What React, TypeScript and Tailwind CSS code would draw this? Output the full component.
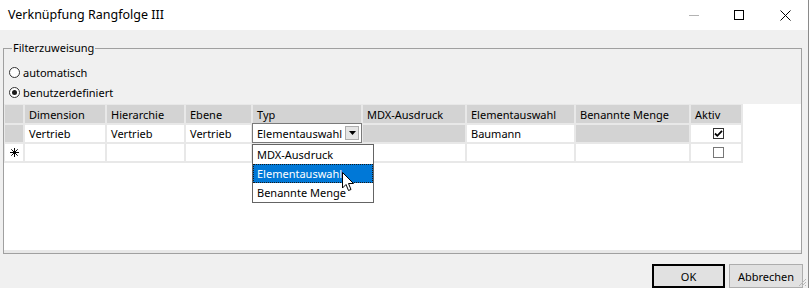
import React from "react";

const font = { fontFamily: '"Noto Sans", "Liberation Sans", sans-serif' };

const columns = ["Dimension", "Hierarchie", "Ebene", "Typ", "MDX-Ausdruck", "Elementauswahl", "Benannte Menge", "Aktiv"];

const Radio = ({ checked, label }: { checked?: boolean; label: string }) => (
    <div className="flex h-[20px] items-center">
        <span className="ml-[5px] flex h-[11px] w-[11px] items-center justify-center rounded-full border border-[#333] bg-white">
            {checked && <span className="h-[5px] w-[5px] rounded-full bg-[#1a1a1a]" />}
        </span>
        <span className="ml-[3px] text-[11px] leading-none text-black">{label}</span>
    </div>
);

const Checkbox = ({ checked }: { checked?: boolean }) => (
    <span className={`flex h-[11px] w-[11px] items-center justify-center border bg-white ${checked ? "border-[#333]" : "border-[#777]"}`}>
        {checked && (
            <svg width="9" height="9" viewBox="0 0 9 9">
                <path d="M1 4.5 L3.3 6.8 L8 1.8" stroke="#000" strokeWidth="1.8" fill="none" />
            </svg>
        )}
    </span>
);

const Cell = ({ children, gray, className = "" }: { children?: React.ReactNode; gray?: boolean; className?: string }) => (
    <div className={`flex items-center pl-[4px] text-[11px] leading-none text-black ${gray ? "bg-[#d3d3d3]" : "bg-white"} ${className}`}>
        {children}
    </div>
);

const TypCombo = () => (
    <div className="relative bg-white">
        <div className="absolute -top-[2px] -left-[1px] -right-[1px] -bottom-[1px] flex items-center border border-[#7a7a7a] bg-white">
            <span className="ml-[4px] text-[11px] leading-none text-black">Elementauswahl</span>
            <span className="ml-auto mr-[2px] flex h-[14px] w-[14px] items-center justify-center border border-[#adadad] bg-[#e5e5e5]">
                <svg width="7" height="4" viewBox="0 0 7 4">
                    <path d="M0 0 H7 L3.5 4 Z" fill="#000" />
                </svg>
            </span>
        </div>
        <div className="absolute top-[19px] -left-[1px] z-10 w-[122px] border border-[#646464] bg-white text-[11px] leading-none">
            <div className="flex h-[19px] items-center pl-[4px] text-black">MDX-Ausdruck</div>
            <div className="flex h-[19px] items-center border border-dotted border-[#1a1a1a] bg-[#0078d7] pl-[3px] text-white">Elementauswahl</div>
            <div className="flex h-[19px] items-center pl-[4px] text-black">Benannte Menge</div>
            <svg className="absolute left-[89px] top-[27px]" width="13" height="20" viewBox="0 0 13 20">
                <path d="M0.5 0.5 V16 L4 12.5 L6.5 18.5 L9 17.5 L6.5 11.5 H11.5 Z" fill="#fff" stroke="#000" strokeWidth="1" strokeLinejoin="miter" />
            </svg>
        </div>
    </div>
);

export default function App() {
    return (
        <div className="relative h-[288px] w-[809px] overflow-hidden border-r border-[#8a8a8a] bg-[#f0f0f0]" style={font}>
            <div className="flex h-[30px] items-center bg-white">
                <span className="ml-[8px] text-[12.5px] leading-none text-black">Verknüpfung Rangfolge III</span>
                <div className="ml-auto flex items-center">
                    <span className="mr-[35px] h-px w-[10px] bg-[#b3b3b3]" />
                    <span className="mr-[36px] h-[10px] w-[10px] border border-black" />
                    <svg className="mr-[17px]" width="11" height="11" viewBox="0 0 11 11">
                        <path d="M0.5 0.5 L10.5 10.5 M10.5 0.5 L0.5 10.5" stroke="#000" strokeWidth="1" />
                    </svg>
                </div>
            </div>

            <fieldset className="mt-[10px] ml-[3px] h-[214px] w-[799px] border border-[#a0a0a0] p-0">
                <legend className="ml-[8px] px-[1px] text-[11px] leading-[16px] text-black">Filterzuweisung</legend>
                <div className="pt-[6px]">
                    <Radio label="automatisch" />
                    <Radio label="benutzerdefiniert" checked />
                </div>
                <div className="mt-[2px] h-[149px] border-b-[3px] border-[#e8e8e8] bg-white">
                    <div className="inline-grid grid-cols-[18px_80px_77px_65px_108px_102px_107px_113px_50px] grid-rows-[18px_17px_17px] gap-[2px] bg-[#e8e8e8] pt-[1px] pr-[2px] pb-[2px] pl-[1px]">
                        <div className="bg-[#d3d3d3]" />
                        {columns.map(c => (
                            <Cell key={c} gray>
                                {c}
                            </Cell>
                        ))}

                        <div className="bg-[#d3d3d3]" />
                        <Cell>Vertrieb</Cell>
                        <Cell>Vertrieb</Cell>
                        <Cell>Vertrieb</Cell>
                        <TypCombo />
                        <Cell gray />
                        <Cell>Baumann</Cell>
                        <Cell gray />
                        <Cell className="justify-center pl-0">
                            <Checkbox checked />
                        </Cell>

                        <div className="flex items-center justify-center bg-white">
                            <svg width="9" height="9" viewBox="0 0 9 9">
                                <path d="M4.5 0 V9 M0 4.5 H9 M1.3 1.3 L7.7 7.7 M7.7 1.3 L1.3 7.7" stroke="#000" strokeWidth="1" />
                            </svg>
                        </div>
                        <Cell />
                        <Cell />
                        <Cell />
                        <Cell />
                        <Cell />
                        <Cell />
                        <Cell />
                        <Cell className="justify-center pl-0">
                            <Checkbox />
                        </Cell>
                    </div>
                </div>
            </fieldset>

            <div className="mt-[10px] flex justify-end gap-[4px] pr-[5px]">
                <button className="flex h-[24px] w-[73px] items-center justify-center border-2 border-black bg-[#e1e1e1] text-[11px] leading-none text-black">
                    OK
                </button>
                <button className="flex h-[24px] w-[74px] items-center justify-center border border-[#adadad] bg-[#e1e1e1] text-[11px] leading-none text-black">
                    Abbrechen
                </button>
            </div>

            <svg className="absolute right-[1px] bottom-[1px]" width="10" height="10" viewBox="0 0 10 10">
                <path d="M9 2 L2 9 M9 5 L5 9 M9 8 L8 9" stroke="#b8b8b8" strokeWidth="1" />
            </svg>
        </div>
    );
}
